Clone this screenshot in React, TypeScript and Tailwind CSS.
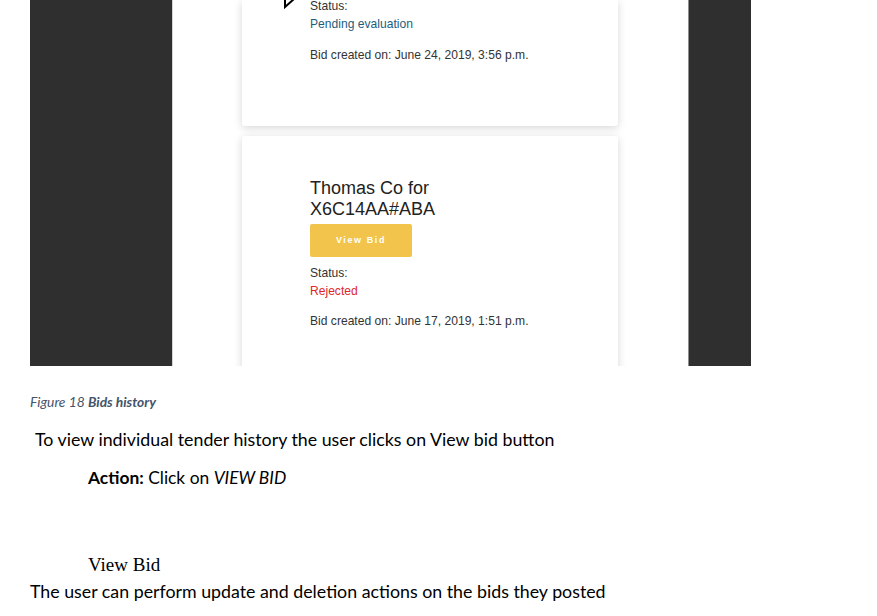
import React from "react";

const sans = "font-['Liberation_Sans',Arial,sans-serif]";
const doc = "font-['Lato','Open_Sans',sans-serif]";

const Cursor = () => (
  <svg className="absolute left-[41px] top-[-6px]" width="14" height="16" viewBox="0 0 14 16">
    <path d="M2 0 L2 13 L11 5" fill="white" stroke="black" strokeWidth="2" strokeLinejoin="miter" />
  </svg>
);

const BidCard = ({
  title,
  status,
  statusColor,
  created,
}: {
  title: string[];
  status: string;
  statusColor: string;
  created: string;
}) => (
  <div className="h-[257px] w-[376px] shrink-0 rounded-[3px] bg-white pl-[68px] pt-[42px] shadow-[0_2px_9px_rgba(0,0,0,0.16)]">
    <div className="text-[18px] leading-[21px] text-[#222]">
      {title.map((t) => (
        <div key={t}>{t}</div>
      ))}
    </div>
    <button className="mt-[4px] h-[33px] w-[102px] rounded-[2px] bg-[#f2c44b] text-[9px] font-bold tracking-[1.6px] text-white">
      View Bid
    </button>
    <div className="mt-[7px] text-[12.1px] leading-[18px] text-[#333]">Status:</div>
    <div className={`text-[12.1px] leading-[18px] ${statusColor}`}>{status}</div>
    <div className="mt-[12px] text-[12.1px] leading-[18px] text-[#333]">{created}</div>
  </div>
);

export default function App() {
  return (
    <div className="h-[616px] w-[877px] overflow-hidden bg-white">
      <div className="flex h-[366px]">
        <div className="w-[30px]" />
        <div className="w-[142px] bg-[#2f2f2f]" />
        <div className={`w-[516px] overflow-hidden border-l border-[#d4d4d4] bg-white pl-[69px] ${sans}`}>
          <div className="flex flex-col gap-[10px]">
            <div className="relative h-[126px] w-[376px] shrink-0 rounded-b-[3px] bg-white pl-[68px] shadow-[0_2px_9px_rgba(0,0,0,0.16)]">
              <Cursor />
              <div className="-mt-[3px] text-[12.1px] leading-[18px] text-[#333]">Status:</div>
              <div className="text-[12.1px] leading-[18px] text-[#1d5d7c]">Pending evaluation</div>
              <div className="mt-[13px] text-[12.1px] leading-[18px] text-[#333]">
                Bid created on: June 24, 2019, 3:56 p.m.
              </div>
            </div>
            <BidCard
              title={["Thomas Co for", "X6C14AA#ABA"]}
              status="Rejected"
              statusColor="text-[#e0262b]"
              created="Bid created on: June 17, 2019, 1:51 p.m."
            />
          </div>
        </div>
        <div className="w-[63px] border-l border-[#8f8f8f] bg-[#2f2f2f]" />
      </div>

      <div className={`${doc} text-black`}>
        <p className="mt-[28px] pl-[30px] text-[13.8px] italic leading-[16px] text-[#44546a]">
          Figure 18 <span className="font-bold">Bids history</span>
        </p>
        <p className="mt-[17px] pl-[35px] text-[17.8px] leading-[24px]">
          To view individual tender history the user clicks on View bid button
        </p>
        <p className="mt-[15px] pl-[88px] text-[17.4px] leading-[24px]">
          <span className="font-bold">Action:</span> Click on <span className="italic">VIEW BID</span>
        </p>
        <p className="mt-[63px] pl-[88px] font-['Liberation_Serif',serif] text-[19px] leading-[24px]">
          View Bid
        </p>
        <p className="mt-[2px] pl-[30px] text-[17.8px] leading-[24px]">
          The user can perform update and deletion actions on the bids they posted
        </p>
      </div>
    </div>
  );
}
